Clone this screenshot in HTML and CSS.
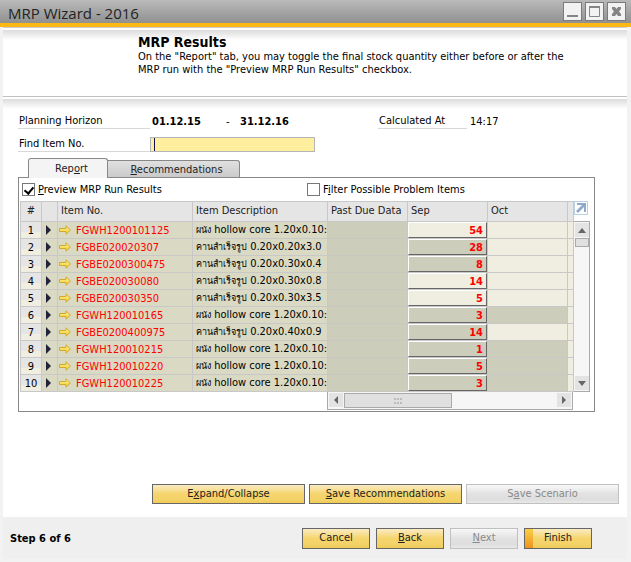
FILE: index.html
```html
<!DOCTYPE html>
<html lang="en">
<head>
  <meta charset="UTF-8">
  <meta name="viewport" content="width=device-width, initial-scale=1.0">
  <title>MRP Wizard - 2016</title>
  <link rel="stylesheet" href="styles.css">
</head>
<body>

  <!-- shared icons -->
  <svg width="0" height="0" class="sprite">
    <defs>
      <linearGradient id="gold" x1="0" y1="0" x2="0" y2="1">
        <stop offset="0" stop-color="#fff6a8"/>
        <stop offset="1" stop-color="#f5c81e"/>
      </linearGradient>
    </defs>
    <symbol id="link-arrow" viewBox="0 0 12 10">
      <path d="M.5 3.5H7V.8L11.4 5 7 9.2V6.5H.5z" fill="url(#gold)" stroke="#d0aa2c"/>
    </symbol>
  </svg>

  <header class="titlebar">
    <h1>MRP Wizard - 2016</h1>
    <div class="window-buttons">
      <button aria-label="Minimize"><svg width="17" height="17"><path d="M3 12h11v2H3z" fill="#858585"/></svg></button>
      <button aria-label="Maximize"><svg width="17" height="17"><path d="M3.500 3.500h10v10h-10z" fill="none" stroke="#858585"/><path d="M3 3h11v2H3z" fill="#858585"/></svg></button>
      <button aria-label="Close"><svg width="17" height="17"><path d="M4 4h3l1.500 2L10 4h3v2l-2 2.500 2 2.500v2h-3l-1.500-2L7 13H4v-2l2-2.500L4 6z" fill="#858585"/></svg></button>
    </div>
  </header>

  <main class="window">
    <section class="intro">
      <h2>MRP Results</h2>
      <p>On the "Report" tab, you may toggle the final stock quantity either before or after the<br>MRP run with the "Preview MRP Run Results" checkbox.</p>
    </section>

    <section class="content">
      <div class="field-row">
        <span class="label">Planning Horizon</span>
        <b class="date">01.12.15</b>
        <span class="dash">-</span>
        <b class="date-to">31.12.16</b>
        <span class="label label-calc">Calculated At</span>
        <span class="time">14:17</span>
      </div>
      <div class="field-row">
        <label class="label" for="find-item">Find Item No.</label>
        <input type="text" id="find-item" class="find">
      </div>

      <div class="tabs">
        <button class="tab active">Rep<u>o</u>rt</button>
        <button class="tab"><u>R</u>ecommendations</button>
      </div>

      <div class="pane">
        <div class="options">
          <label class="check"><input type="checkbox" checked><span><u>P</u>review MRP Run Results</span></label>
          <label class="check"><input type="checkbox"><span>F<u>i</u>lter Possible Problem Items</span></label>
        </div>

        <div class="grid-area">
          <table class="grid">
            <colgroup>
              <col class="c-num"><col class="c-mark"><col class="c-item"><col>
              <col class="c-month"><col class="c-month"><col class="c-month"><col class="c-next">
            </colgroup>
            <thead>
              <tr><th>#</th><th></th><th>Item No.</th><th>Item Description</th><th>Past Due Data</th><th>Sep</th><th>Oct</th><th></th></tr>
            </thead>
            <tbody id="rows"></tbody>
          </table>
          <div class="side">
            <button class="expand" aria-label="Expand grid"><svg viewBox="0 0 12 12"><path d="M2 1h9v9H9V5l-6 6-2-2 6-6H2z" fill="#8faacb"/></svg></button>
            <div class="vscroll">
              <button aria-label="Scroll up"><svg width="14" height="14"><path d="M7 5l4 5H3z" fill="#666"/></svg></button>
              <div class="vthumb"></div>
              <button class="end" aria-label="Scroll down"><svg width="14" height="14"><path d="M3 5h8l-4 5z" fill="#666"/></svg></button>
            </div>
          </div>
        </div>

        <div class="hscroll">
          <button aria-label="Scroll left"><svg width="14" height="14"><path d="M9 3v8L5 7z" fill="#666"/></svg></button>
          <div class="hthumb"><svg width="8" height="6"><path d="M0 0h2v2H0zM3 0h2v2H3zM6 0h2v2H6zM0 4h2v2H0zM3 4h2v2H3zM6 4h2v2H6z" fill="#bbb"/></svg></div>
          <button class="end" aria-label="Scroll right"><svg width="14" height="14"><path d="M5 3v8l4-4z" fill="#666"/></svg></button>
        </div>
      </div>

      <div class="actions">
        <button class="btn">E<u>x</u>pand/Collapse</button>
        <button class="btn"><u>S</u>ave Recommendations</button>
        <button class="btn" disabled>S<u>a</u>ve Scenario</button>
      </div>
    </section>

    <footer class="footer">
      <b>Step 6 of 6</b>
      <div class="nav">
        <button class="btn">Cancel</button>
        <button class="btn"><u>B</u>ack</button>
        <button class="btn" disabled><u>N</u>ext</button>
        <button class="btn btn-default">Finish</button>
      </div>
    </footer>
  </main>

  <script src="script.js"></script>
</body>
</html>
```
FILE: styles.css
```css
* {
  box-sizing: border-box;
}

body {
  margin: 0;
  min-height: 100vh;
  display: flex;
  flex-direction: column;
  background: #f2f2f2;
  font-family: "DejaVu Sans Condensed", "Noto Sans", sans-serif;
  font-size: 11px;
  line-height: 13px;
  color: #000;
}

button, input {
  font: inherit;
  margin: 0;
  padding: 0;
}

button {
  color: #222;
}

svg {
  display: block;
}

.sprite {
  position: absolute;
}

.titlebar {
  display: flex;
  justify-content: space-between;
  height: 27px;
  padding: 0 5px 0 8px;
  background: linear-gradient(#bababa, #909090);
  border-bottom: 4px solid #fdb813;
}

.titlebar h1 {
  margin: 0;
  padding-top: 2px;
  font: 15px/23px "Open Sans", sans-serif;
  color: #222;
}

.window-buttons {
  display: flex;
  gap: 3px;
  padding-top: 2px;
}

.window-buttons button {
  width: 19px;
  height: 19px;
  border: 1px solid #7b7b7b;
  background: #f2f2f2;
}

.window {
  flex: 1;
  display: flex;
  flex-direction: column;
  margin: 0 4px 3px 3px;
  background: #fff;
  border-top: 1px solid #ccc;
}

.intro {
  height: 67px;
  margin-top: 2px;
  padding: 5px 0 0 135px;
  background: linear-gradient(#dcdcdc, #fff 10px);
  border-bottom: 1px solid #c0c0c0;
}

.intro h2 {
  margin: 0;
  font-size: 14px;
  line-height: 15px;
}

.intro p {
  margin: 0;
}

.content {
  flex: 1;
  margin-top: 2px;
  padding: 14px 32px 0 15px;
  background: linear-gradient(#dcdcdc, #fff 10px);
}

.field-row {
  display: flex;
  align-items: center;
  height: 16px;
  margin-bottom: 7px;
}

.label {
  width: 132px;
  height: 16px;
  padding: 1px;
  border-bottom: 1px solid #d8d8d8;
}

.date {
  width: 76px;
  padding-left: 2px;
}

.dash {
  width: 14px;
}

.date-to {
  width: 138px;
}

.label-calc {
  width: 89px;
}

.time {
  padding-left: 3px;
}

.find {
  width: 165px;
  height: 15px;
  border: 1px solid #b5b5b5;
  padding: 0 3px;
  background: linear-gradient(#101050, #101050) 3px 0 / 1px 13px no-repeat #ffee9e;
}

.tabs {
  display: flex;
  align-items: flex-end;
  height: 18px;
  padding-left: 10px;
}

.tab {
  width: 132px;
  height: 17px;
  border: 1px solid #888;
  border-bottom: 0;
  border-left: 0;
  border-radius: 0 3px 0 0;
  background: linear-gradient(#e0e0e0, #cacaca);
  padding-left: 6px;
}

.tab.active {
  position: relative;
  width: 80px;
  height: 20px;
  margin-bottom: -1px;
  border-left: 1px solid #888;
  border-radius: 3px 3px 0 0;
  background: #f4f4f4;
  padding-left: 7px;
}

.pane {
  padding: 5px 4px 1px 1px;
  border: 1px solid #888;
}

.options {
  display: flex;
  height: 18px;
  padding-left: 2px;
}

.check {
  flex: none;
  display: flex;
  gap: 3px;
  width: 285px;
  height: 14px;
}

.check input {
  appearance: none;
  width: 13px;
  height: 13px;
  border: 1px solid #777;
  background: #fff;
}

.check input:checked::after {
  content: "";
  display: block;
  width: 4px;
  height: 7px;
  margin: 1px 0 0 3px;
  border: solid #000;
  border-width: 0 2px 2px 0;
  transform: rotate(40deg);
}

.grid-area {
  display: flex;
}

.grid {
  flex: 1;
  width: 0;
  table-layout: fixed;
  border-spacing: 0;
  border-left: 1px solid #c8c8c8;
}

.c-num { width: 21px; }
.c-mark { width: 16px; }
.c-item { width: 135px; }
.c-month { width: 80px; }
.c-next { width: 6px; }

.grid th, .grid td {
  height: 17px;
  padding: 0 0 0 3px;
  border-right: 1px solid #c8c8c8;
  border-bottom: 1px solid #c8c8c8;
  white-space: nowrap;
  overflow: hidden;
  line-height: 13px;
}

.grid th {
  height: 21px;
  padding-bottom: 2px;
  border-top: 1px solid #c8c8c8;
  background: #e5e5e5;
  font-weight: normal;
  text-align: left;
  color: #222;
}

.grid th:first-child, .grid td.num {
  text-align: center;
  padding-left: 0;
}

.grid td {
  background: #dadac4;
}

.grid td.num {
  background: linear-gradient(#e5e5e5 60%, #f0eee0 60%);
}

.grid td.mark {
  padding-left: 4px;
}

.grid td.item {
  padding-left: 1px;
}

.grid td.item a {
  display: flex;
  align-items: center;
  gap: 5px;
  color: #f00;
  text-decoration: none;
}

.thai {
  font-size: 9px;
}

.grid td.past {
  background: #cccdbb;
  border-color: #c8c8c0;
}

.grid td.pale {
  background: #f0eee0;
}

.grid td.dark {
  background: #cccdbb;
}

.grid td.qty {
  padding: 0;
}

.qty button {
  display: block;
  width: 100%;
  height: 16px;
  padding-right: 3px;
  border: 1px solid;
  border-color: #fff #666 #666 #fff;
  background: none;
  color: #f00;
  font-weight: bold;
  text-align: right;
  line-height: 13px;
}

.side {
  display: flex;
  flex-direction: column;
  width: 16px;
}

.expand {
  width: 14px;
  height: 14px;
  margin-bottom: 6px;
  border: 1px solid #b8cfe0;
  background: #fff;
}

.vscroll {
  flex: 1;
  display: flex;
  flex-direction: column;
  padding: 1px 0 1px 1px;
  border: 1px solid #aaa;
  border-left: 0;
  background: #f6f6f6;
}

.vscroll button, .hscroll button {
  width: 14px;
  height: 14px;
  border: 0;
  background: #e3e3e3;
}

.vthumb {
  height: 9px;
  margin-top: 1px;
  border: 1px solid #aaa;
  background: #e0e0e0;
}

.vscroll .end {
  margin-top: auto;
}

.hscroll {
  display: flex;
  width: 246px;
  height: 18px;
  margin: 0 17px 0 auto;
  padding: 1px;
  border: 1px solid #aaa;
  border-top: 0;
  background: #f6f6f6;
}

.hthumb {
  display: flex;
  align-items: center;
  justify-content: center;
  width: 108px;
  margin-left: 1px;
  border: 1px solid #aaa;
  background: #e0e0e0;
}

.hscroll .end {
  margin-left: auto;
}

.actions {
  display: flex;
  justify-content: flex-end;
  gap: 4px;
  margin: 72px -24px 13px 0;
}

.btn {
  width: 68px;
  height: 21px;
  padding-bottom: 2px;
  border: 1px solid #666;
  background: linear-gradient(#faebc4, #f5d56c 50%, #f3d269 80%, #efcb55);
}

.btn:disabled {
  border-color: #c0c0c0;
  background: linear-gradient(#f8f8f8, #e2e2e2 50%, #dedede 80%, #e8e8e8);
  color: #8a8a8a;
}

.actions .btn {
  width: 153px;
  height: 20px;
}

.footer {
  display: flex;
  align-items: center;
  justify-content: space-between;
  height: 42px;
  padding: 0 35px 0 7px;
  background: #efefef;
}

.nav {
  display: flex;
  gap: 6px;
}

.btn-default {
  background:
    linear-gradient(#fbce45, #ee9420) 0 0 / 8px 100% no-repeat,
    linear-gradient(#faebc4, #f5d56c 50%, #f3d269 80%, #efcb55);
}
```
FILE: script.js
```js
// item, Thai name, size, Sep quantity, Sep shade, Oct shade
const items = [
  ['FGWH1200101125', 'ผนัง', 'hollow core 1.20x0.10:', 54, 'pale', 'pale'],
  ['FGBE020020307', 'คานสำเร็จรูป', '0.20x0.20x3.0', 28, 'dark', 'pale'],
  ['FGBE0200300475', 'คานสำเร็จรูป', '0.20x0.30x0.4', 8, 'dark', 'pale'],
  ['FGBE020030080', 'คานสำเร็จรูป', '0.20x0.30x0.8', 14, 'pale', 'pale'],
  ['FGBE020030350', 'คานสำเร็จรูป', '0.20x0.30x3.5', 5, 'pale', 'pale'],
  ['FGWH120010165', 'ผนัง', 'hollow core 1.20x0.10:', 3, 'dark', 'dark'],
  ['FGBE0200400975', 'คานสำเร็จรูป', '0.20x0.40x0.9', 14, 'dark', 'pale'],
  ['FGWH120010215', 'ผนัง', 'hollow core 1.20x0.10:', 1, 'dark', 'dark'],
  ['FGWH120010220', 'ผนัง', 'hollow core 1.20x0.10:', 5, 'dark', 'dark'],
  ['FGWH120010225', 'ผนัง', 'hollow core 1.20x0.10:', 3, 'dark', 'dark']
];

document.getElementById('rows').innerHTML = items.map((row, i) => `
  <tr>
    <td class="num">${i + 1}</td>
    <td class="mark"><svg width="6" height="10"><path d="M0 0l5 5-5 5z" fill="#22223a"/></svg></td>
    <td class="item"><a href="#"><svg width="12" height="10"><use href="#link-arrow"/></svg>${row[0]}</a></td>
    <td><span class="thai">${row[1]}</span> ${row[2]}</td>
    <td class="past"></td>
    <td class="qty ${row[4]}"><button>${row[3]}</button></td>
    <td class="${row[5]}"></td>
    <td class="pale"></td>
  </tr>`).join('');
```
